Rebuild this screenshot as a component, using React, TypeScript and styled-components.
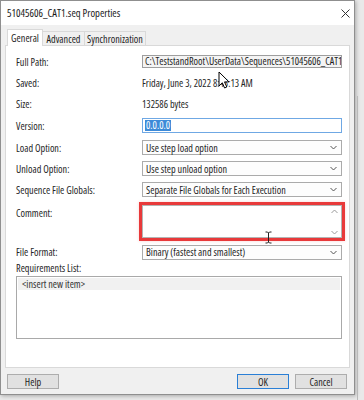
import React from "react";
import styled, { createGlobalStyle } from "styled-components";

const GlobalStyle = createGlobalStyle`
  html, body { margin: 0; padding: 0; background: #e6e6e6; }
  body {
    font-family: "Open Sans", "Liberation Sans", Arial, sans-serif;
    font-stretch: 75%;
  }
  * { box-sizing: border-box; }
`;

const Screen = styled.div`
  position: relative;
  width: 364px;
  height: 400px;
  overflow: hidden;
  background: #e9e9e9;
  display: flex;
  align-items: flex-start;
`;

const Dialog = styled.div`
  width: 355px;
  height: 395px;
  border: 1px solid #8f8f8f;
  background: #f0f0f0;
  display: flex;
  flex-direction: column;
  box-shadow: 1px 1px 4px rgba(0, 0, 0, 0.28);
  font-size: 10.2px;
  line-height: 12px;
  color: #1e1e1e;
`;

const TitleBar = styled.div`
  height: 24px;
  background: #ffffff;
  display: flex;
  align-items: center;
  justify-content: space-between;
  padding: 0 4px 0 6px;
`;

const TitleText = styled.span`
  font-size: 10.6px;
  color: #1a1a1a;
`;

const Body = styled.div`
  flex: 1;
  display: flex;
  flex-direction: column;
  padding: 4px 4px 0 4px;
`;

const TabStrip = styled.div`
  height: 16px;
  display: flex;
  align-items: flex-end;
  padding-left: 2px;
`;

const Tab = styled.div<{ $active?: boolean; $w: number }>`
  width: ${(p) => p.$w}px;
  height: ${(p) => (p.$active ? 17 : 14)}px;
  margin-bottom: ${(p) => (p.$active ? -1 : 0)}px;
  position: relative;
  z-index: ${(p) => (p.$active ? 2 : 1)};
  background: ${(p) => (p.$active ? "#ffffff" : "#f0f0f0")};
  border: 1px solid #d9d9d9;
  border-bottom: none;
  margin-left: ${(p) => (p.$active ? 0 : -1)}px;
  display: flex;
  align-items: center;
  justify-content: center;
  white-space: nowrap;
  color: #1e1e1e;
`;

const Panel = styled.div`
  height: 323px;
  background: #ffffff;
  border: 1px solid #d9d9d9;
  padding: 5px 7px 0 10px;
  display: flex;
  flex-direction: column;
`;

const Row = styled.div<{ $h: number; $top?: boolean }>`
  height: ${(p) => p.$h}px;
  display: grid;
  grid-template-columns: 126px 200px;
  align-items: ${(p) => (p.$top ? "start" : "center")};
  padding-top: ${(p) => (p.$top ? 5 : 0)}px;
`;

const Label = styled.span<{ $pad?: number }>`
  color: #262626;
  padding-top: ${(p) => p.$pad ?? 0}px;
  white-space: nowrap;
`;

const Value = styled.span`
  color: #262626;
  white-space: nowrap;
`;

const ReadOnlyBox = styled.div`
  height: 13px;
  border: 1px solid #9e9e9e;
  background: #f4f4f4;
  padding-left: 2px;
  line-height: 11px;
  white-space: nowrap;
  overflow: hidden;
`;

const VersionBox = styled.div`
  height: 15px;
  border: 1px solid #6fa8e4;
  background: #ffffff;
  padding: 1px 2px;
  display: flex;
  align-items: center;
`;

const Selected = styled.span`
  background: #3d8ad8;
  color: #ffffff;
  padding: 0 1px;
  line-height: 11px;
`;

const SelectBox = styled.div`
  height: 15px;
  border: 1px solid #ababab;
  background: #fdfdfd;
  padding: 0 4px 0 3px;
  display: flex;
  align-items: center;
  justify-content: space-between;
  white-space: nowrap;
`;

const CommentBox = styled.div`
  height: 33px;
  border: 1px solid #b4b4b4;
  background: #ffffff;
  outline: 3px solid #e8393a;
  box-shadow: 0 0 3px 3px rgba(232, 57, 58, 0.22);
  display: flex;
  justify-content: flex-end;
`;

const ScrollCol = styled.div`
  width: 13px;
  display: flex;
  flex-direction: column;
  justify-content: space-between;
  align-items: center;
  padding: 3px 0 2px;
`;

const ListLabel = styled.div`
  height: 11px;
  line-height: 11px;
  color: #262626;
`;

const ListBox = styled.div`
  width: 326px;
  height: 63px;
  margin-top: 2px;
  border: 1px solid #a9a9a9;
  background: #ffffff;
  padding: 1px;
`;

const ListItem = styled.div`
  height: 12px;
  line-height: 12px;
  background: #f1f1f1;
  padding-left: 4px;
  color: #333;
`;

const Footer = styled.div`
  height: 26px;
  display: flex;
  justify-content: space-between;
  align-items: flex-start;
  padding: 6px 3px 0 2px;
`;

const ButtonGroup = styled.div`
  display: flex;
  gap: 6px;
`;

const Button = styled.div<{ $default?: boolean }>`
  width: 52px;
  height: 15px;
  background: #e1e1e1;
  border: 1px solid ${(p) => (p.$default ? "#2a7fd6" : "#adadad")};
  display: flex;
  align-items: center;
  justify-content: center;
  color: #1e1e1e;
`;

const BackdropLine = styled.div`
  position: absolute;
  left: 357px;
  top: 96px;
  width: 1px;
  height: 304px;
  background: #b9b9b9;
`;

const Overlay = styled.svg<{ $x: number; $y: number }>`
  position: absolute;
  left: ${(p) => p.$x}px;
  top: ${(p) => p.$y}px;
  pointer-events: none;
`;

const Chevron = ({ color = "#555" }: { color?: string }) => (
  <svg width="7" height="5" viewBox="0 0 7 5">
    <path d="M0.5 1 L3.5 4 L6.5 1" fill="none" stroke={color} strokeWidth="1" />
  </svg>
);

const ChevronUp = () => (
  <svg width="7" height="5" viewBox="0 0 7 5">
    <path d="M0.5 4 L3.5 1 L6.5 4" fill="none" stroke="#9a9a9a" strokeWidth="1" />
  </svg>
);

const Select = ({ text }: { text: string }) => (
  <SelectBox>
    <span>{text}</span>
    <Chevron />
  </SelectBox>
);

export default function App() {
  return (
    <>
      <GlobalStyle />
      <Screen>
        <Dialog>
          <TitleBar>
            <TitleText>51045606_CAT1.seq Properties</TitleText>
            <svg width="9" height="9" viewBox="0 0 9 9">
              <path d="M0.5 0.5 L8.5 8.5 M8.5 0.5 L0.5 8.5" stroke="#333" strokeWidth="1" />
            </svg>
          </TitleBar>
          <Body>
            <TabStrip>
              <Tab $active $w={36}>General</Tab>
              <Tab $w={43}>Advanced</Tab>
              <Tab $w={62}>Synchronization</Tab>
            </TabStrip>
            <Panel>
              <Row $h={21}>
                <Label>Full Path:</Label>
                <ReadOnlyBox>C:\TeststandRoot\UserData\Sequences\51045606_CAT1.seq</ReadOnlyBox>
              </Row>
              <Row $h={21}>
                <Label>Saved:</Label>
                <Value>Friday, June 3, 2022 8:43:13 AM</Value>
              </Row>
              <Row $h={21}>
                <Label>Size:</Label>
                <Value>132586 bytes</Value>
              </Row>
              <Row $h={23}>
                <Label>Version:</Label>
                <VersionBox>
                  <Selected>0.0.0.0</Selected>
                </VersionBox>
              </Row>
              <Row $h={21}>
                <Label>Load Option:</Label>
                <Select text="Use step load option" />
              </Row>
              <Row $h={21}>
                <Label>Unload Option:</Label>
                <Select text="Use step unload option" />
              </Row>
              <Row $h={21}>
                <Label>Sequence File Globals:</Label>
                <Select text="Separate File Globals for Each Execution" />
              </Row>
              <Row $h={41} $top>
                <Label $pad={2}>Comment:</Label>
                <CommentBox>
                  <ScrollCol>
                    <ChevronUp />
                    <Chevron color="#9a9a9a" />
                  </ScrollCol>
                </CommentBox>
              </Row>
              <Row $h={22}>
                <Label>File Format:</Label>
                <Select text="Binary (fastest and smallest)" />
              </Row>
              <ListLabel>Requirements List:</ListLabel>
              <ListBox>
                <ListItem>&lt;insert new item&gt;</ListItem>
              </ListBox>
            </Panel>
            <Footer>
              <Button>Help</Button>
              <ButtonGroup>
                <Button $default>OK</Button>
                <Button>Cancel</Button>
              </ButtonGroup>
            </Footer>
          </Body>
        </Dialog>
        <BackdropLine />
        <Overlay $x={218} $y={71} width="13" height="19" viewBox="0 0 13 19">
          <path
            d="M1 1 L1 15 L4.3 11.8 L6.6 17 L8.8 16 L6.5 10.9 L11 10.9 Z"
            fill="#ffffff"
            stroke="#000000"
            strokeWidth="1"
            strokeLinejoin="round"
          />
        </Overlay>
        <Overlay $x={264} $y={231} width="9" height="13" viewBox="0 0 9 13">
          <path
            d="M1.5 1 H3.5 L4.5 2 L5.5 1 H7.5 M4.5 2 V11 M1.5 12 H3.5 L4.5 11 L5.5 12 H7.5"
            fill="none"
            stroke="#222"
            strokeWidth="1"
          />
        </Overlay>
      </Screen>
    </>
  );
}
